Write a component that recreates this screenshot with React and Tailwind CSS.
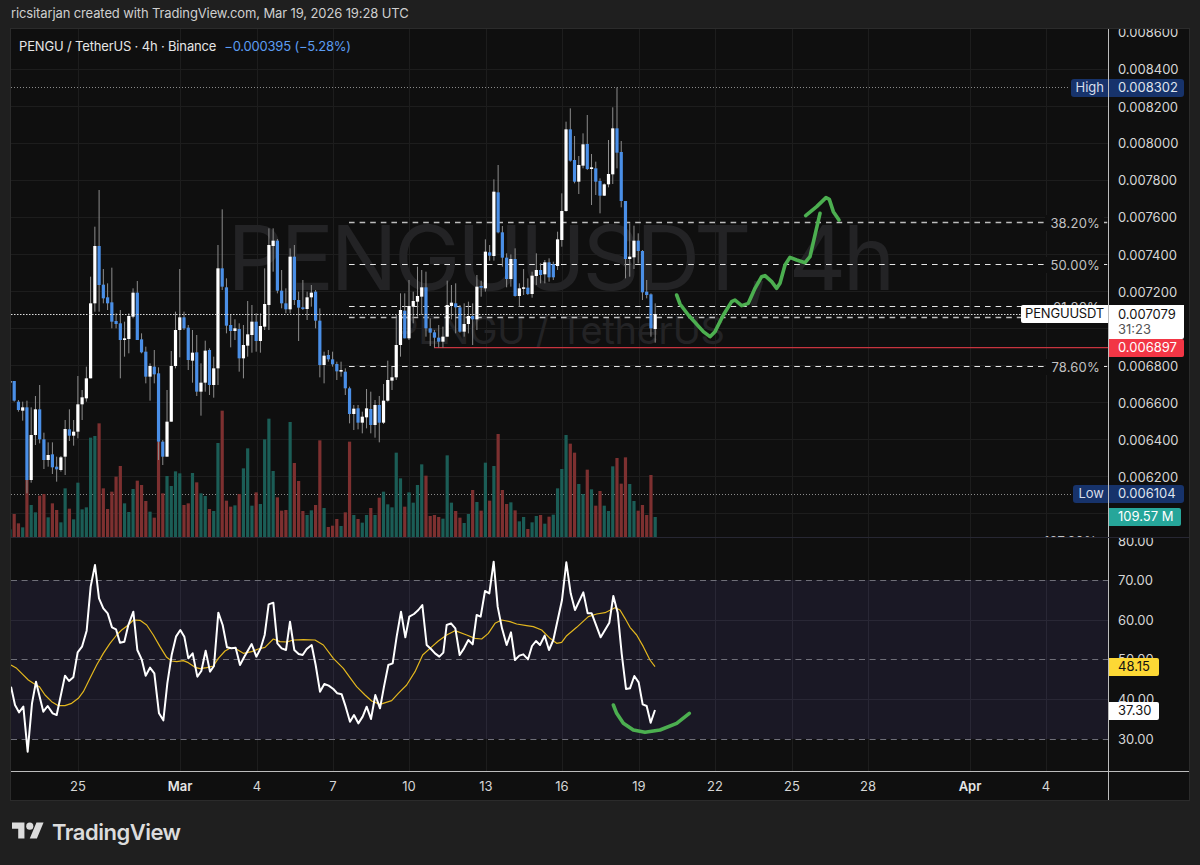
import React from "react";

// candle rows: [high, bodyTop, bodyBottom, low, up]  — pixel rows measured off the chart
const A = [
[333,333,338,340,1],[333,333,392,395,0],[390,395,420,425,0],[395,412,422,452,1],[392,412,630,670,0],[412,495,630,638,1],[378,418,495,525,1],[345,418,508,520,0],[488,508,570,597,0],[517,555,570,590,1],[517,553,592,612,0],[560,590,598,635,0],[558,562,600,605,1],[450,477,560,615,1],[418,478,497,513,0],[450,485,497,527,1],[318,403,485,505,1],[360,382,403,450,1],[290,325,385,395,1],[20,100,325,325,1],[-130,-72,100,125,1],[-240,-72,45,125,0],[-3,44,85,100,0],[40,82,100,120,0],[-7,97,155,175,0],[130,153,162,175,0],[120,160,210,325,0],[155,205,210,260,1],[130,138,207,250,1],[55,68,140,145,1],[33,68,210,210,0],[190,208,247,250,0],[230,245,320,340,0],[280,288,320,392,1],[240,290,313,340,0],[292,310,515,570,0],[510,515,560,585,0],[360,455,560,560,1],[243,288,455,455,1],[125,180,288,295,1],[-3,142,180,262,1],[125,142,175,180,0],[165,173,270,300,0],[180,248,272,338,1],[195,247,365,378,0],[280,338,365,437,1],[212,242,338,365,1],[235,240,345,375,0],[260,295,345,383,1],[-75,-5,295,345,1],[-182,-5,50,60,0],[25,52,167,190,0],[135,165,183,232,0],[148,175,183,210,1],[160,177,265,305,0],[165,225,265,325,1],[93,193,227,260,1],[105,155,195,248,1],[130,155,213,245,0],[130,168,213,248,1],[-5,102,170,180,1],[-125,-75,105,180,1],[-125,-88,-72,5,1],[-93,-88,62,70,0],[0,62,100,115,0],[55,100,118,130,0],[-65,-40,118,130,1],[-75,-40,90,105,0],[65,90,113,213,0],[30,112,117,120,0],[65,82,117,150,1],[45,68,82,110,1],[60,65,152,175,0],[115,152,285,322,0],[245,257,285,340,1],[240,255,268,275,0],[245,268,283,290,0],[275,282,304,330,0],[275,300,305,320,1],[295,305,355,375,0],[350,355,432,460,0],[405,416,432,480,1],[405,415,458,478,0],[425,440,458,490,1],[357,415,442,475,1],[365,417,465,490,0],[390,405,465,503,1],[378,405,458,517,0],[342,392,458,462,1],[272,330,392,395,1],[290,322,332,360,1],[135,225,322,330,1],
];
const B = [
[670,720,825,860,1],[670,722,805,805,0],[630,708,805,810,1],[665,693,710,760,1],[590,678,695,740,1],[600,652,680,735,1],[605,652,775,800,0],[745,775,788,828,0],[780,787,803,833,0],[765,803,815,833,0],[770,800,815,833,1],[632,705,800,800,1],[645,698,708,748,1],[640,700,712,790,0],[705,712,785,788,0],[700,762,785,800,1],[695,738,762,790,1],[700,738,748,825,0],[615,650,748,780,1],[632,648,653,680,0],[508,545,655,665,1],[525,547,557,572,0],[328,365,558,572,1],[285,367,487,490,0],[468,487,563,590,0],[550,563,627,652,0],[553,567,627,650,1],[535,567,678,680,0],[640,655,678,710,1],[597,652,655,675,1],[625,653,672,675,0],[605,617,672,683,1],[550,600,618,645,1],[580,600,615,640,0],[570,577,613,640,1],[565,577,622,635,0],[575,583,622,630,0],[485,508,588,600,1],[370,423,510,530,1],[155,178,423,425,1],[115,178,272,275,0],[198,270,335,340,0],[258,285,335,372,1],[190,223,287,295,1],[135,222,297,300,0],[252,292,297,405,1],[275,295,335,375,0],[325,333,377,430,0],[340,343,377,378,1],[210,312,343,352,1],[112,175,313,342,1],[52,175,248,295,0],[213,246,393,412,0],[393,393,567,625,0],[460,560,567,620,1],[467,512,562,597,1],[490,512,543,580,0],[540,543,667,690,0],[630,665,675,685,0],[670,673,775,800,0],[700,732,777,818,1],
];
const candles = [
  ...A.map((r) => r.slice(0, 4).map((v) => 270 + v / 3).concat(r[4])),
  ...B.map((r) => r.slice(0, 4).map((v) => 70 + v / 3).concat(r[4])),
];
const cx = (i) => 14.2 + 4.245 * (i - 1);

// volume: [top row, up]
const VA = [[778,1],[732,0],[760,0],[772,1],[630,0],[705,1],[727,1],[677,0],[672,0],[742,1],[700,0],[720,0],[757,1],[655,1],[716,0],[748,1],[638,1],[718,1],[712,1],[503,1],[498,1],[460,0],[655,0],[717,0],[665,0],[620,0],[588,0],[700,1],[726,1],[657,1],[632,0],[645,0],[693,0],[725,1],[743,0],[515,0],[670,0],[618,1],[648,1],[604,1],[610,1],[705,0],[700,0],[609,1],[637,0],[670,1],[678,1],[717,0],[723,1],[519,1],[422,0],[692,0],[710,0],[706,1],[672,0],[595,1],[535,1],[707,1],[667,0],[702,1],[508,1],[446,1],[603,1],[682,0],[722,0],[720,0],[456,1],[579,0],[633,0],[723,0],[735,1],[721,1],[705,0],[511,0],[714,1],[771,0],[767,0],[747,0],[768,1],[727,0],[515,0],[735,1],[747,0],[758,1],[735,1],[714,0],[735,1],[683,0],[665,1],[703,1],[712,1],[548,1]];
const VB = [[235,1],[320,0],[277,1],[308,1],[255,1],[193,1],[227,0],[348,0],[345,0],[351,0],[356,1],[166,1],[308,1],[333,0],[353,0],[369,1],[342,1],[270,0],[306,1],[332,0],[188,1],[302,0],[198,1],[102,0],[270,0],[312,0],[307,1],[331,0],[364,1],[351,1],[387,0],[367,1],[348,1],[345,0],[371,1],[350,0],[344,1],[265,1],[207,1],[105,1],[131,0],[158,0],[252,1],[282,1],[209,0],[268,1],[317,0],[273,0],[317,1],[333,1],[199,1],[174,0],[251,0],[172,0],[252,1],[303,1],[332,0],[315,0],[345,0],[225,0],[351,1]];
const volumes = [...VA.map(([z, u]) => [270 + z / 3, u]), ...VB.map(([z, u]) => [400 + z / 3, u])];

const RA = [[33,440],[45,495],[57,517],[70,500],[83,635],[96,490],[108,425],[130,515],[143,498],[158,520],[170,525],[195,407],[207,423],[220,412],[233,337],[246,320],[260,272],[272,140],[285,75],[297,175],[310,205],[323,220],[336,262],[348,268],[360,308],[373,305],[385,255],[400,215],[412,330],[425,358],[437,407],[450,383],[463,400],[477,520],[490,541],[502,430],[515,345],[528,290],[541,270],[553,290],[565,355],[578,340],[592,410],[604,393],[617,332],[630,395],[642,378],[655,218],[668,255],[681,322],[694,325],[707,323],[720,375],[733,350],[755,312],[769,350],[782,325],[794,285],[806,193],[820,188],[832,310],[845,325],[858,330],[870,245],[883,330],[896,342],[908,345],[920,327],[935,315],[947,375],[960,455],[973,432],[986,437],[1000,447],[1012,460],[1025,463],[1037,500],[1050,545]];
const RB = [[12,525],[25,550],[38,530],[50,500],[63,537],[76,465],[90,505],[102,440],[115,375],[128,370],[140,290],[153,215],[166,292],[178,230],[192,222],[205,210],[217,195],[230,315],[243,327],[255,340],[268,350],[280,338],[290,255],[303,250],[316,265],[329,345],[342,325],[355,300],[368,313],[380,225],[392,230],[405,153],[418,160],[431,65],[443,200],[456,265],[470,315],[483,277],[495,360],[508,347],[520,343],[534,358],[546,318],[558,303],[570,315],[584,287],[597,330],[610,300],[636,180],[649,67],[662,160],[675,210],[700,157],[713,220],[725,220],[752,292],[778,248],[790,168],[803,218],[815,340],[828,447],[840,445],[853,408],[866,427],[878,493],[890,498],[902,548],[915,510]];
const YA = [[33,375],[50,385],[65,400],[85,420],[100,430],[118,440],[135,465],[155,485],[175,497],[195,497],[215,490],[235,475],[250,455],[270,415],[290,375],[310,340],[330,310],[350,285],[365,270],[385,255],[400,240],[420,241],[440,255],[460,285],[480,320],[500,352],[515,363],[530,365],[550,362],[565,368],[585,382],[600,386],[620,383],[640,378],[655,355],[675,333],[690,325],[705,325],[730,340],[755,335],[775,327],[795,322],[820,297],[840,305],[860,306],[880,300],[910,299],[945,300],[970,315],[1000,355],[1030,385],[1050,413]];
const YB = [[20,440],[45,465],[65,483],[90,493],[125,482],[145,460],[170,435],[195,395],[218,345],[240,325],[265,303],[290,285],[315,272],[350,285],[375,295],[395,297],[415,280],[435,250],[455,240],[480,245],[500,252],[530,257],[550,260],[575,270],[600,295],[620,310],[635,307],[650,287],[680,262],[715,230],[740,222],[765,218],[795,203],[810,210],[825,235],[840,262],[860,285],[880,320],[900,360],[915,380]];
const rsiPts = (a, b) =>
  [...a.map(([x, y]) => `${x / 3},${540 + y / 3}`), ...b.map(([x, y]) => `${350 + x / 3},${540 + y / 3}`)].join(" ");

const pts = (list, ox, oy) => list.map(([x, y]) => `${ox + x / 3},${oy + y / 3}`).join(" ");
const G1 = [[50,345],[60,372],[85,405],[130,455],[150,470],[165,455],[190,405],[215,365],[225,360],[245,377],[265,370],[285,325],[305,290],[315,287],[335,305],[350,325],[360,310],[375,255],[390,232],[410,240],[435,248],[450,230],[480,100]];
const G2 = [[437,107],[470,80],[498,53],[508,58],[520,95],[537,120]];
const G3 = [[790,495],[800,520],[820,550],[850,570],[885,577],[930,570],[980,550],[1018,520]];

const vGrid = [78, 180, 257, 333, 409, 486, 562, 639, 715, 792, 868, 970, 1046];
const hGrid = [69, 106, 143, 180, 217, 254, 291, 328, 365, 402, 439, 476, 513];
const fib = [[222, 1], [264, 0], [306, 0], [317, 1], [366, 0]];

const priceLabels = [
  [32, "0.008600"], [69, "0.008400"], [106.5, "0.008200"], [143, "0.008000"], [180, "0.007800"], [217, "0.007600"],
  [254.5, "0.007400"], [291.5, "0.007200"], [366, "0.006800"], [403, "0.006600"], [440, "0.006400"], [476.5, "0.006200"],
];
const rsiLabels = [[541, "80.00"], [580, "70.00"], [620, "60.00"], [659, "50.00"], [699, "40.00"], [739, "30.00"]];
const timeLabels = [
  [78, "25"], [180, "Mar", 1], [257, "4"], [333, "7"], [409, "10"], [486, "13"], [562, "16"], [639, "19"],
  [715, "22"], [792, "25"], [868, "28"], [970, "Apr", 1], [1046, "4"],
];
const fibLabels = [[222.5, "38.20%"], [264.5, "50.00%"], [306.5, "61.80%"], [367, "78.60%"]];

function Axis({ items, top }) {
  return items.map(([y, t]) => (
    <span key={t} className="absolute left-[9px] -translate-y-1/2 leading-4 text-[13px] text-[#d6d6d6]" style={{ top: y - top }}>
      {t}
    </span>
  ));
}

export default function App() {
  return (
    <div className="w-[1200px] h-[865px] bg-[#1f1f1f] flex flex-col font-['Inter',sans-serif] overflow-hidden">
      <div className="h-[28px] pl-[11px] flex items-center text-[13px] tracking-[-0.12px] text-[#cfcfcf] whitespace-nowrap">
        ricsitarjan created with TradingView.com, Mar 19, 2026 19:28 UTC
      </div>

      <div className="mx-[10px] w-[1180px] h-[773px] border border-[#2b2b2b] bg-[#0f0f0f] flex flex-col">
        {/* price pane */}
        <div className="h-[508px] flex">
          <div className="relative w-[1097px] overflow-hidden">
            <svg className="absolute inset-0" width="1097" height="508" viewBox="11 29 1097 508">
              {hGrid.map((y) => <line key={y} x1="11" x2="1108" y1={y + 0.5} y2={y + 0.5} stroke="#1d1d1d" />)}
              {vGrid.map((x) => <line key={x} x1={x + 0.5} x2={x + 0.5} y1="29" y2="537" stroke="#1d1d1d" />)}
            </svg>
            <div className="absolute inset-0 pb-[16px] flex flex-col items-center justify-center text-[#232325] whitespace-nowrap">
              <div className="text-[89px] leading-[110px] tracking-[-3.5px] font-normal">PENGUUSDT, 4h</div>
              <div className="text-[38px] leading-[35px] font-normal tracking-[-0.3px]">PENGU / TetherUS</div>
            </div>
            <svg className="absolute inset-0" width="1097" height="508" viewBox="11 29 1097 508">
              <line x1="11" x2="1070" y1="87.5" y2="87.5" stroke="#8a8a8a" strokeDasharray="1 2" />
              <line x1="11" x2="1075" y1="494.5" y2="494.5" stroke="#8a8a8a" strokeDasharray="1 2" />
              {fib.map(([y, thick]) => (
                <line key={y} x1="349" x2="1108" y1={y + 0.5} y2={y + 0.5} stroke={thick ? "#bdbdbd" : "#e4e4e4"} strokeWidth={thick ? 1.4 : 1} strokeDasharray="5.6 5" />
              ))}
              <line x1="434" x2="1108" y1="347.7" y2="347.7" stroke="#c8343f" strokeWidth="1.2" />
              {volumes.map(([top, up], i) => (
                <rect key={i} x={cx(i) - 1.6} y={top} width="3.2" height={537 - top} fill={up ? "#1b5d56" : "#7d3030"} />
              ))}
              {candles.map(([hi, t, b, lo, up], i) => (
                <g key={i}>
                  <rect x={cx(i) - 0.5} y={hi} width="1" height={lo - hi} fill="#8c8c8c" />
                  <rect x={cx(i) - 1.6} y={t} width="3.2" height={Math.max(b - t, 1.5)} fill={up ? "#ffffff" : "#4a8fe7"} />
                </g>
              ))}
              <line x1="11" x2="1022" y1="314.5" y2="314.5" stroke="#dddddd" strokeDasharray="1.5 1.5" />
              <polyline points={pts(G1, 660, 180)} fill="none" stroke="#4caf50" strokeWidth="3.6" strokeLinecap="round" strokeLinejoin="round" />
              <polyline points={pts(G2, 660, 180)} fill="none" stroke="#4caf50" strokeWidth="3.6" strokeLinecap="round" strokeLinejoin="round" />
            </svg>

            <div className="absolute left-[8px] top-[9px] flex gap-[8px] text-[13px] leading-4 whitespace-nowrap">
              <span className="text-[#e6e6e6] tracking-[-0.16px]">PENGU / TetherUS · 4h · Binance</span>
              <span className="text-[#5c9df2] tracking-[-0.2px]">−0.000395 (−5.28%)</span>
            </div>

            {fibLabels.map(([y, t]) => (
              <span key={t} className="absolute right-[4px] -translate-y-1/2 pl-[5px] pr-[4px] bg-[#0f0f0f] text-[13px] leading-4 tracking-[0.2px] text-[#c2c2c2]" style={{ top: y - 29 }}>
                {t}
              </span>
            ))}
            <span className="absolute right-[11px] -translate-y-1/2 text-[13px] leading-4 tracking-[0.2px] text-[#c2c2c2]" style={{ top: 512 }}>127.20%</span>

            <div className="absolute right-0 top-[50px] h-[18px] pl-[5px] pr-[4px] flex items-center bg-[#17336b] rounded-l-[3px] text-[13px] text-[#d8deea]">High</div>
            <div className="absolute right-0 top-[456px] h-[18px] pl-[5px] pr-[4px] flex items-center bg-[#17336b] rounded-l-[3px] text-[13px] text-[#d8deea]">Low</div>
            <div className="absolute right-0 top-[276px] h-[18px] pl-[4px] pr-[4px] flex items-center bg-white rounded-l-[2px] text-[13px] tracking-[-0.2px] text-[#131313]">PENGUUSDT</div>
          </div>

          <div className="relative flex-1 border-l border-[#bdbdbd] overflow-hidden">
            <Axis items={priceLabels} top={29} />
            <div className="absolute left-0 top-[50px] w-[75px] h-[18px] pl-[9px] flex items-center bg-[#17336b] rounded-r-[3px] text-[13px] text-[#dfe4ee]">0.008302</div>
            <div className="absolute left-0 top-[456px] w-[75px] h-[18px] pl-[9px] flex items-center bg-[#17336b] rounded-r-[3px] text-[13px] text-[#dfe4ee]">0.006104</div>
            <div className="absolute left-0 top-[479px] w-[72px] h-[18px] pl-[9px] flex items-center bg-[#26a69a] rounded-r-[2px] text-[13px] text-white">109.57 M</div>
            <div className="absolute left-0 top-[276px] w-[75px] h-[34px] pl-[9px] flex flex-col justify-center bg-white rounded-br-[2px] text-[13px] leading-[15px]">
              <span className="text-[#131313]">0.007079</span>
              <span className="text-[#555555]">31:23</span>
            </div>
            <div className="absolute left-0 top-[310px] w-[75px] h-[18px] pl-[9px] flex items-center bg-[#f23645] rounded-r-[2px] text-[13px] text-white">0.006897</div>
          </div>
        </div>

        {/* separator */}
        <div className="h-[1px] bg-[#272733]" />

        {/* RSI pane */}
        <div className="h-[233px] flex">
          <div className="relative w-[1097px] overflow-hidden">
            <svg className="absolute inset-0" width="1097" height="233" viewBox="11 538 1097 233">
              <rect x="11" y="580" width="1097" height="159" fill="#1a1825" />
              {[620, 699].map((y) => <line key={y} x1="11" x2="1108" y1={y + 0.5} y2={y + 0.5} stroke="#292735" />)}
              {vGrid.map((x) => <line key={x} x1={x + 0.5} x2={x + 0.5} y1="538" y2="580" stroke="#1d1d1d" />)}
              {vGrid.map((x) => <line key={x} x1={x + 0.5} x2={x + 0.5} y1="580" y2="739" stroke="#292735" />)}
              {vGrid.map((x) => <line key={x} x1={x + 0.5} x2={x + 0.5} y1="739" y2="771" stroke="#1d1d1d" />)}
              {[580, 659, 739].map((y) => <line key={y} x1="11" x2="1108" y1={y + 0.5} y2={y + 0.5} stroke="#6f6f79" strokeDasharray="6 4.6" />)}
              <polyline points={rsiPts(YA, YB)} fill="none" stroke="#e3b71e" strokeWidth="1.2" strokeLinejoin="round" />
              <polyline points={rsiPts(RA, RB)} fill="none" stroke="#ffffff" strokeWidth="2" strokeLinejoin="round" />
              <polyline points={pts(G3, 350, 540)} fill="none" stroke="#4caf50" strokeWidth="3.6" strokeLinecap="round" strokeLinejoin="round" />
            </svg>
          </div>
          <div className="relative flex-1 border-l border-[#bdbdbd] overflow-hidden">
            <Axis items={rsiLabels} top={538} />
            <div className="absolute left-0 top-[120px] w-[50px] h-[18px] pl-[9px] flex items-center bg-[#fdd835] rounded-r-[2px] text-[13px] text-[#131313]">48.15</div>
            <div className="absolute left-0 top-[164px] w-[50px] h-[18px] pl-[9px] flex items-center bg-white rounded-r-[2px] text-[13px] text-[#131313]">37.30</div>
          </div>
        </div>

        {/* time axis */}
        <div className="h-[29px] flex border-t border-[#bdbdbd]">
          <div className="relative w-[1097px]">
            {timeLabels.map(([x, t, bold]) => (
              <span key={x} className={`absolute top-[6px] -translate-x-1/2 text-[13px] leading-4 ${bold ? "font-semibold text-[#e6e6e6]" : "text-[#d6d6d6]"}`} style={{ left: x - 11 }}>
                {t}
              </span>
            ))}
          </div>
          <div className="flex-1 border-l border-[#bdbdbd]" />
        </div>
      </div>

      <div className="flex-1 pl-[12px] pt-[17px] flex items-start gap-[8px]">
        <svg width="32" height="25" viewBox="0 0 36 28" className="mt-[1px]" fill="#dcdcdc">
          <path d="M14 22H7V11H0V4h14v18zM28 22h-8l7.5-18h8L28 22z" />
          <circle cx="20" cy="8" r="4" />
        </svg>
        <span className="text-[22px] leading-[28px] font-semibold tracking-[-0.5px] text-[#dcdcdc]">TradingView</span>
      </div>
    </div>
  );
}
